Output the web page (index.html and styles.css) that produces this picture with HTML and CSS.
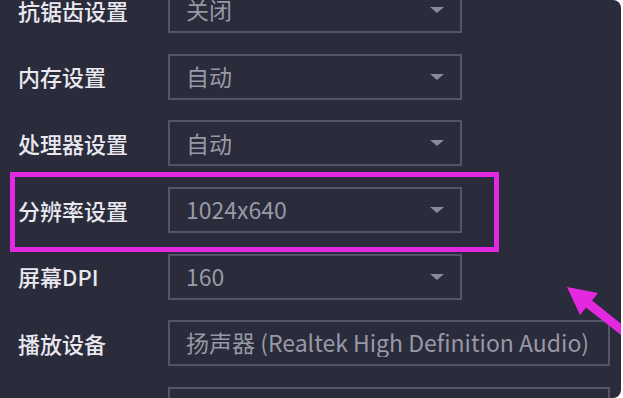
FILE: index.html
```html
<!DOCTYPE html>
<html lang="zh-CN">
<head>
<meta charset="utf-8">
<title>设置</title>
<link rel="stylesheet" href="styles.css">
</head>
<body>
<div class="panel">
  <div class="list">
    <div class="row"><span class="label">抗锯齿设置</span><div class="select"><span class="value">关闭</span><span class="caret"></span></div></div>
    <div class="row"><span class="label">内存设置</span><div class="select"><span class="value">自动</span><span class="caret"></span></div></div>
    <div class="row"><span class="label">处理器设置</span><div class="select"><span class="value">自动</span><span class="caret"></span></div></div>
    <div class="row"><span class="label">分辨率设置</span><div class="select"><span class="value">1024x640</span><span class="caret"></span></div></div>
    <div class="row"><span class="label">屏幕DPI</span><div class="select"><span class="value">160</span><span class="caret"></span></div></div>
    <div class="row"><span class="label">播放设备</span><div class="select wide"><span class="value">扬声器 (Realtek High Definition Audio)</span></div></div>
    <div class="row"><span class="label">录音设备</span><div class="select wide"><span class="value">麦克风 (Realtek High Definition Audio)</span></div></div>
  </div>
  <div class="highlight"></div>
  <svg class="pointer" width="63" height="70" viewBox="560 280 63 70" aria-hidden="true">
    <polygon points="567,287 598,293 592,300.5 630,331 630,342 586,307.5 580,315" fill="#e428e0"/>
  </svg>
</div>
</body>
</html>
```
FILE: styles.css
```css
html, body {
  margin: 0;
  padding: 0;
  background: #ffffff;
}

.panel {
  position: relative;
  width: 621px;
  height: 398px;
  overflow: hidden;
  background: #2a2b3b;
  border-radius: 0 8px 8px 0;
  font-family: "Noto Sans CJK SC", "Noto Sans", sans-serif;
  line-height: 1.2;
}

.list {
  display: flex;
  flex-direction: column;
  gap: 20.67px;
  margin-top: -13px;
  padding-left: 18px;
}

.row {
  display: flex;
  align-items: center;
  height: 46px;
}

.label {
  width: 150px;
  flex: none;
  font-size: 22px;
  font-weight: 500;
  color: #e8e8ee;
  white-space: nowrap;
}

.select {
  box-sizing: border-box;
  width: 294px;
  height: 46px;
  flex: none;
  border: 2px solid #53546a;
  display: flex;
  align-items: center;
  justify-content: space-between;
  padding: 0 16px;
  overflow: hidden;
}

.select.wide {
  width: 442px;
  padding-right: 14px;
}

.value {
  font-size: 23px;
  color: #9899a6;
  white-space: nowrap;
  overflow: hidden;
}

.caret {
  flex: none;
  width: 0;
  height: 0;
  border-left: 7px solid transparent;
  border-right: 7px solid transparent;
  border-top: 6px solid #8a8b98;
}

.highlight {
  position: absolute;
  left: 10px;
  top: 172px;
  width: 489px;
  height: 80px;
  box-sizing: border-box;
  border: 5px solid #e228e0;
}

.pointer {
  position: absolute;
  left: 560px;
  top: 280px;
}
```
